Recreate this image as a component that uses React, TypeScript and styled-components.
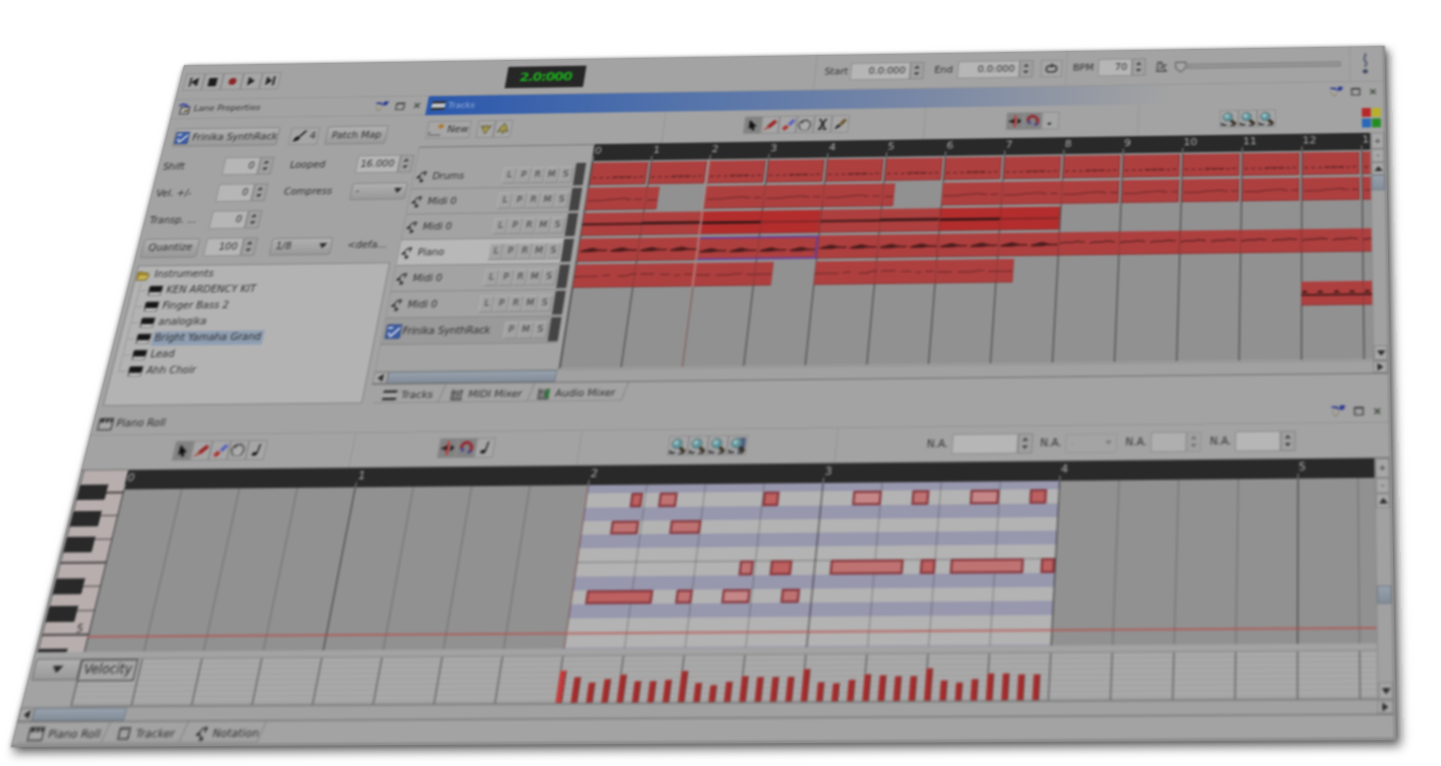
import React from "react";
import styled, { createGlobalStyle, css } from "styled-components";

/* ---------- perspective projection of the window ---------- */

const W = 1254;
const H = 700;
type Pt = [number, number];
const corners: [Pt, Pt, Pt, Pt] = [
  [184, 65.3],
  [1384.5, 46],
  [1396, 740],
  [11, 747],
];

function project([p0, p1, p2, p3]: [Pt, Pt, Pt, Pt]): string {
  const dx1 = p1[0] - p2[0];
  const dx2 = p3[0] - p2[0];
  const sx = p0[0] - p1[0] + p2[0] - p3[0];
  const dy1 = p1[1] - p2[1];
  const dy2 = p3[1] - p2[1];
  const sy = p0[1] - p1[1] + p2[1] - p3[1];
  const det = dx1 * dy2 - dx2 * dy1;
  const g = (sx * dy2 - dx2 * sy) / det;
  const h = (dx1 * sy - sx * dy1) / det;
  const a = p1[0] - p0[0] + g * p1[0];
  const b = p3[0] - p0[0] + h * p3[0];
  const d = p1[1] - p0[1] + g * p1[1];
  const e = p3[1] - p0[1] + h * p3[1];
  const m = [a / W, d / W, 0, g / W, b / H, e / H, 0, h / H, 0, 0, 1, 0, p0[0], p0[1], 0, 1];
  return `matrix3d(${m.map((n) => n.toFixed(9)).join(",")})`;
}

const Global = createGlobalStyle`
  html, body { margin: 0; background: #fff; }
  * { box-sizing: border-box; }
`;

const Stage = styled.div`
  width: 1441px;
  height: 766px;
  overflow: hidden;
  background: #fff;
`;

const Projected = styled.div`
  width: ${W}px;
  height: ${H}px;
  transform-origin: 0 0;
  transform: ${project(corners)};
  background: #949494;
  box-shadow: 4px 5px 9px rgba(0, 0, 0, 0.6), 0 0 5px rgba(0, 0, 0, 0.3);
`;

const Frame = styled.div`
  width: ${W}px;
  height: ${H}px;
  display: flex;
  flex-direction: column;
  overflow: hidden;
  background: #a3a3a3;
  border-right: 2px solid #8a8a8a;
  border-bottom: 2px solid #868686;
  color: #2f2f2f;
  font: 10px/1 "DejaVu Sans", sans-serif;
  white-space: nowrap;
  filter: blur(1.2px);
`;

/* ---------- shared parts ---------- */

const Gap = styled.span<{ $w: number }>`
  flex: 0 0 ${(p) => p.$w}px;
`;

const Label = styled.span<{ $w?: number }>`
  flex: none;
  ${(p) => p.$w && css`width: ${p.$w}px;`}
`;

const raised = css`
  background: linear-gradient(#b0b0b0, #999);
  border: 1px solid #828282;
  border-radius: 2px;
`;

const IconButton = styled.span<{ $w?: number; $on?: boolean }>`
  flex: none;
  width: ${(p) => p.$w ?? 18}px;
  height: 20px;
  display: flex;
  align-items: center;
  justify-content: center;
  gap: 3px;
  border: 1px solid #8a8a8a;
  background: ${(p) => (p.$on ? "#828282" : "#a6a6a6")};
`;

const Button = styled.span<{ $w: number }>`
  flex: none;
  width: ${(p) => p.$w}px;
  height: 21px;
  display: flex;
  align-items: center;
  justify-content: center;
  ${raised}
`;

const Field = styled.span<{ $w: number; $dim?: boolean }>`
  flex: none;
  width: ${(p) => p.$w}px;
  height: 20px;
  display: flex;
  align-items: center;
  justify-content: flex-end;
  padding-right: 4px;
  background: ${(p) => (p.$dim ? "#afafaf" : "#b6b6b6")};
  border: 1px solid #8e8e8e;
`;

const SpinBox = styled.span<{ $dim?: boolean }>`
  flex: none;
  width: 14px;
  height: 20px;
  display: flex;
  flex-direction: column;
  align-items: center;
  justify-content: space-evenly;
  border: 1px solid #858585;
  background: #a0a0a0;
  opacity: ${(p) => (p.$dim ? 0.5 : 1)};
`;

const Select = styled.span<{ $w: number; $dim?: boolean }>`
  flex: none;
  width: ${(p) => p.$w}px;
  height: 19px;
  display: flex;
  align-items: center;
  justify-content: space-between;
  padding: 0 4px;
  ${raised}
  ${(p) => p.$dim && css`background: #a4a4a4; border-color: #959595; color: #8c8c8c;`}
`;

const Tri = ({ d = "down", s = 6, c = "#262626" }: { d?: "up" | "down" | "left" | "right"; s?: number; c?: string }) => {
  const pts = { up: "0,5 3,1 6,5", down: "0,1 6,1 3,5", left: "5,0 1,3 5,6", right: "1,0 5,3 1,6" }[d];
  return (
    <svg width={s} height={s} viewBox="0 0 6 6">
      <polygon points={pts} fill={c} />
    </svg>
  );
};

const Spin = ({ dim }: { dim?: boolean }) => (
  <SpinBox $dim={dim}>
    <Tri d="up" s={5.5} c="#383838" />
    <Tri s={5.5} c="#383838" />
  </SpinBox>
);

/* ---------- icons ---------- */

const Svg = ({ w = 14, h = 14, vb = "0 0 16 16", children }: { w?: number; h?: number; vb?: string; children: React.ReactNode }) => (
  <svg width={w} height={h} viewBox={vb} fill="none">
    {children}
  </svg>
);

const Rewind = () => <Svg><path d="M3 2h2v12H3zM13 2v12L5 8zM13 6v4" fill="#222" /></Svg>;
const Stop = () => <Svg><path d="M3 3h10v11H3z" fill="#1c1c1c" /></Svg>;
const Rec = () => <Svg><circle cx="8" cy="8" r="4.6" fill="#8c2626" /></Svg>;
const Play = () => <Svg><path d="M4 2l8 6-8 6z" fill="#222" /></Svg>;
const Forward = () => <Svg><path d="M3 2l7 6-7 6zM11 2h2.4v12H11z" fill="#222" /></Svg>;

const Cursor = () => <Svg><path d="M4 1l9 9H9l2 4-2.500 1-2-4L4 13z" fill="#0c0c0c" /></Svg>;
const Pencil = () => (
  <Svg w={17} h={16}>
    <path d="M5 9l7-7 3 3-7 7z" fill="#9c2828" />
    <path d="M5 9l3 3-7 2.500z" fill="#a8605a" />
  </Svg>
);
const Eraser = () => (
  <Svg w={17} h={16}>
    <path d="M8 7l5-5.500 2.500 2.500-5 6z" fill="#5a62bc" />
    <path d="M2.500 12l4-4 3 3-4 4z" fill="#ac3232" />
    <path d="M7 8l3 2.500" stroke="#bbb" />
  </Svg>
);
const Hand = () => (
  <Svg w={15} h={15}>
    <path d="M4 14L1.500 8l2-4 2 1.500V2.500L8 3l2-1 1 2 2 0 1.500 4-2 6" fill="#adadad" stroke="#3c3c3c" strokeWidth="1.300" />
    <path d="M4 14.500h8.500" stroke="#666" />
  </Svg>
);
const Cut = () => <Svg><path d="M4 1l5 8 1 5M12 1L7 9l-2 5M3 14.500h4M9 14.500h4" stroke="#161616" strokeWidth="1.900" /></Svg>;
const Brush = () => (
  <Svg>
    <path d="M7 8l5-7 3.500 2.500-6 7z" fill="#6b5426" />
    <path d="M6 8l3 3-3 2-4 2.500 1-3.500z" fill="#2a2a2a" />
  </Svg>
);
const DarkBrush = () => (
  <Svg w={15} h={15}>
    <path d="M7 8l6-7 2 1.500-6 7z" fill="#333" />
    <path d="M6 8l3 3-3 3-5 1 2-5z" fill="#1f1f1f" />
  </Svg>
);
const NoteIcon = () => (
  <Svg>
    <path d="M11 1L9 12" stroke="#222" strokeWidth="1.600" />
    <ellipse cx="6.500" cy="12.500" rx="3" ry="2.200" fill="#1c1c1c" />
  </Svg>
);
const SnapLine = () => (
  <Svg>
    <path d="M1 7h4v-3l4 4-4 4V9H1zM15 8l-4-4v8z" fill="#1c1010" />
    <path d="M8 0v16" stroke="#c83434" strokeWidth="2.200" />
  </Svg>
);
const Magnet = () => (
  <Svg>
    <path d="M3 9C1 3 7 0 11 3c4 3 3 7 1 10" stroke="#942632" strokeWidth="3.400" />
    <path d="M3 8l2 4M13 11l-2 3" stroke="#3b449c" strokeWidth="3" />
  </Svg>
);
const Dot = () => <Svg><circle cx="7" cy="12" r="1.700" fill="#222" /></Svg>;
const Zoom = ({ extra }: { extra?: boolean }) => (
  <Svg w={17} h={18}>
    {extra && <path d="M9 1h6v13H9z" fill="#4a5a7c" />}
    <path d="M1 14.500h5M1.500 12v3M9 15h5" stroke="#2d2d2d" strokeWidth="1.500" />
    <path d="M9 8.500l5.500 5.500" stroke="#33291a" strokeWidth="3" />
    <circle cx="7" cy="6" r="4.500" fill="#5a949c" stroke="#6c7678" strokeWidth="1" />
    <circle cx="6" cy="5" r="2.200" fill="#98c0c2" />
  </Svg>
);
const KeysIcon = () => (
  <Svg w={14} h={11} vb="0 0 14 11">
    <path d="M.5 .5h13v10H.5z" fill="#555" />
    <path d="M.5 .5h13v6H.5z" fill="#151515" />
    <path d="M2 8.500h10.500" stroke="#dcdcdc" strokeWidth="2.400" />
    <path d="M5.500 6v2M9.500 6v2" stroke="#333" strokeWidth="1.200" />
  </Svg>
);
const FolderIcon = () => (
  <Svg w={14} h={12} vb="0 0 14 12">
    <path d="M1 2h4l1 1h5v2h2l-2 6H1z" fill="#a08828" stroke="#75642a" strokeWidth=".8" />
    <path d="M3 6h9l-2 4H2z" fill="#c9b55a" />
  </Svg>
);
const LaneNote = () => (
  <Svg w={12} h={16} vb="0 0 12 16">
    <path d="M5.500 3l4 .5M5.500 3.500L3 8M9.500 4L8.500 7M4 9l3 3.500" stroke="#333" strokeWidth="1.200" />
    <circle cx="8.800" cy="3.300" r="1.500" fill="#303030" />
    <ellipse cx="2.800" cy="8.500" rx="1.900" ry="1.600" fill="#303030" />
    <ellipse cx="6.500" cy="12.700" rx="1.900" ry="1.700" fill="#303030" />
  </Svg>
);
const SynthIcon = () => (
  <Svg w={16} h={16}>
    <path d="M1 1h14v14H1z" fill="#3c5ca4" stroke="#26407a" />
    <path d="M3 9l3 4 8-9M2 4h5" stroke="#c8cfdc" strokeWidth="2" />
  </Svg>
);
const PanelIcon = () => (
  <Svg w={14} h={14}>
    <path d="M4 5h10v9H4z" fill="#b6b6b6" stroke="#333" strokeWidth="1.300" />
    <path d="M1 3c4-3 8-2 11 2" stroke="#303c9c" strokeWidth="2.200" />
    <path d="M8 11l5-2" stroke="#5a4a22" strokeWidth="2" />
  </Svg>
);
const TracksIcon = ({ lit }: { lit?: boolean }) => (
  <Svg w={14} h={12} vb="0 0 14 12">
    <path d="M0 1h14v10H0z" fill={lit ? "#c4c8ce" : "#acacac"} />
    <path d="M0 1h14v2.500H0zM0 8.500h14V11H0z" fill="#2c2c2c" />
  </Svg>
);
const MixerIcon = ({ green }: { green?: boolean }) => (
  <Svg w={13} h={13}>
    <path d="M1 2v13h13M4 3v11M8 3v11M12 2v12M2 6h4M7 9h3M10 5h4" stroke="#3f3f3f" strokeWidth="1.500" />
    {green && <path d="M9.500 3h4v11h-4z" fill="#23752f" />}
  </Svg>
);
const RollIcon = () => (
  <Svg w={15} h={13} vb="0 0 16 14">
    <path d="M1 1h14v12H1z" stroke="#3c3c3c" strokeWidth="1.300" fill="#a9a9a9" />
    <path d="M2 1h4v4H2zM7.500 1h3v4h-3zM12 1h2.500v4H12z" fill="#333" />
  </Svg>
);
const TrackerIcon = () => <Svg w={13} h={13}><path d="M2 2h11v12H2zM5 2v2M9 2v2" stroke="#333" strokeWidth="1.600" /></Svg>;
const PinIcon = () => (
  <Svg w={14} h={12} vb="0 0 14 12">
    <path d="M1 2h5l1 2M9 4l1-3h3l-1 3z" stroke="#2c3a90" strokeWidth="1.700" fill="#2c3a90" />
    <path d="M3 5v4l2 2 2-2V6" stroke="#8b8878" strokeWidth="1.300" fill="#b4b1a6" />
  </Svg>
);
const MaxIcon = () => <Svg w={10} h={10} vb="0 0 10 10"><path d="M1 1.500h8v7.500H1z" stroke="#3a3a3a" strokeWidth="1.200" /><path d="M1 1.800h8" stroke="#3a3a3a" strokeWidth="1.800" /></Svg>;
const CloseIcon = () => <Svg w={9} h={9} vb="0 0 10 10"><path d="M2 2l6 6M8 2L2 8" stroke="#3f4a3f" strokeWidth="1.700" /></Svg>;
const LoopIcon = () => <Svg><path d="M4 4.500h8l2 2.500v3l-2 2.500H4L2 10V7z" stroke="#2e2e2e" strokeWidth="1.800" /><path d="M7 1.500L10 4 7 6.500" stroke="#2e2e2e" strokeWidth="1.400" /></Svg>;
const Metronome = () => <Svg w={14} h={16}><path d="M2 14L3 2h4l5 12zM1 14h13M5 11l8-6M5 5h2" stroke="#484848" strokeWidth="1.500" /></Svg>;
const Exclaim = () => <Svg w={10} h={26} vb="0 0 10 26"><path d="M5 1c2 3-3 6 0 9s0 5 0 7" stroke="#555c6c" strokeWidth="2" /><circle cx="5" cy="22" r="2.500" fill="#3d4660" /></Svg>;
const NewIcon = () => <Svg w={16} h={16}><path d="M1 14h12M1 14V10" stroke="#6d6d6d" strokeWidth="1.500" /><path d="M12 1l.8 2.200L15 4l-2.200.8L12 7l-.8-2.200L9 4l2.200-.8z" fill="#b2701c" stroke="#b2701c" /></Svg>;
const ArrowDn = () => <Svg w={14} h={14}><path d="M2 3l4 3 1-3h2l1 3 4-3-3 6-3 5-3-5z" fill="#a89a48" stroke="#5e5a3a" /></Svg>;
const ArrowUp = () => <Svg w={14} h={14}><path d="M2 12l3-6 4-5 3 5 2 6-4-2-1 4H8l-1-4z" fill="#a89a48" stroke="#5e5a3a" /></Svg>;

/* ---------- transport bar ---------- */

const Transport = styled.div`
  flex: 0 0 41px;
  display: flex;
  align-items: center;
  padding-left: 5px;
  border-bottom: 1px solid #949494;
`;

const Lcd = styled.span`
  flex: none;
  width: 82px;
  height: 25px;
  display: flex;
  align-items: center;
  justify-content: center;
  background: #262626;
  color: #1cac1c;
  font-size: 14.500px;
  font-weight: bold;
  letter-spacing: -1.050px;
`;

const Divider = styled.span`
  flex: none;
  width: 1px;
  height: 100%;
  background: #949494;
`;

const SliderTrack = styled.span`
  flex: none;
  width: 157px;
  height: 6px;
  border: 1px solid #808080;
  background: #949494;
`;

const Knob = () => (
  <Svg w={14} h={15}><path d="M2 2h12v7l-6 6-6-6z" fill="#a8a8a8" stroke="#686868" strokeWidth="1.600" /></Svg>
);

/* ---------- pane chrome ---------- */

const Middle = styled.div`
  flex: 0 0 341px;
  display: flex;
`;

const Pane = styled.section<{ $w?: number }>`
  flex: ${(p) => (p.$w ? `0 0 ${p.$w}px` : "1 1 0")};
  min-width: 0;
  display: flex;
  flex-direction: column;
`;

const TitleBar = styled.header<{ $active?: boolean; $h?: number }>`
  flex: 0 0 ${(p) => p.$h ?? 22}px;
  display: flex;
  align-items: center;
  gap: 3px;
  padding-left: 5px;
  border-bottom: 1px solid #949494;
  ${(p) =>
    p.$active &&
    css`
      color: #9db4da;
      border-bottom: 0;
      background: linear-gradient(90deg, #2a58ae, #5876aa 30%, #7686a6 50%, #a3a3a3 78%);
    `}
`;

const TitleText = styled.span<{ $size?: number }>`
  flex: 1;
  font-size: ${(p) => p.$size ?? 9}px;
`;

const Controls = styled.span`
  display: flex;
  align-items: center;
  gap: 8px;
  padding-right: 6px;
`;

const WindowControls = () => (
  <Controls>
    <PinIcon />
    <MaxIcon />
    <CloseIcon />
  </Controls>
);

const ToolRow = styled.div<{ $h: number }>`
  flex: 0 0 ${(p) => p.$h}px;
  display: flex;
`;

const ToolCell = styled.div<{ $w?: number; $start?: boolean; $pr?: number; $pl?: number; $pb?: number }>`
  flex: ${(p) => (p.$w ? `0 0 ${p.$w}px` : "1")};
  display: flex;
  align-items: center;
  justify-content: ${(p) => (p.$start ? "flex-start" : "center")};
  padding: 0 ${(p) => p.$pr ?? 0}px ${(p) => p.$pb ?? 0}px ${(p) => p.$pl ?? 0}px;
  & + & {
    border-left: 1px solid #949494;
  }
`;

/* ---------- lane properties ---------- */

const FormRow = styled.div<{ $h?: number; $pl?: number; $pt?: number }>`
  flex: 0 0 ${(p) => p.$h ?? 30}px;
  display: flex;
  align-items: center;
  padding: ${(p) => p.$pt ?? 0}px 0 0 ${(p) => p.$pl ?? 5}px;
`;

const TreeBox = styled.div`
  flex: none;
  width: 256px;
  height: 148px;
  margin: 4px 0 0 5px;
  padding: 1px 0 0 0;
  background: #b3b3b3;
  border: 1px solid #828282;
`;

const TreeRow = styled.div<{ $depth?: number }>`
  height: 17px;
  display: flex;
  align-items: center;
  gap: 2px;
  padding-left: ${(p) => (p.$depth ? 6 : 0)}px;
`;

const Branch = styled.span<{ $last?: boolean }>`
  align-self: flex-start;
  width: 8px;
  height: ${(p) => (p.$last ? 9 : 17)}px;
  border-left: 1px dotted #858585;
  background: linear-gradient(#999, #999) 0 8px / 8px 1px no-repeat;
`;

const TreeText = styled.span<{ $sel?: boolean }>`
  padding: 2px 2px 3px 2px;
  font-size: 10px;
  ${(p) => p.$sel && css`background: #8f9fb3;`}
`;

const instruments = ["KEN ARDENCY KIT", "Finger Bass 2", "analogika", "Bright Yamaha Grand", "Lead", "Ahh Choir"];

/* ---------- lanes ---------- */

const LaneArea = styled.div`
  flex: 0 0 243px;
  display: flex;
`;

const LaneList = styled.div`
  flex: 0 0 182px;
  padding: 19px 5px 0 0;
  border-top: 1px solid #6f6f6f;
  border-right: 1px solid #6f6f6f;
  border-left: 1px solid #939393;
`;

const Lane = styled.div<{ $tone?: string }>`
  height: 28px;
  display: flex;
  align-items: center;
  padding-left: 2px;
  border-bottom: 1px solid #868686;
  background: ${(p) => p.$tone ?? "transparent"};
`;

const LaneName = styled.span<{ $pl?: number }>`
  flex: 1;
  padding-left: ${(p) => p.$pl ?? 2}px;
  letter-spacing: -0.1px;
`;

const Toggle = styled.span`
  width: 14.400px;
  height: 18px;
  display: flex;
  align-items: center;
  justify-content: center;
  border: 1px solid #858585;
  border-left-color: #b4b4b4;
  border-top-color: #b4b4b4;
  background: #a3a3a3;
  color: #333;
  font-size: 9px;
`;

const Meter = styled.span`
  width: 10px;
  height: 25px;
  margin-left: 2px;
  background: #444;
`;

const Timeline = styled.div`
  flex: 1;
  min-width: 0;
  display: flex;
  flex-direction: column;
  overflow: hidden;
`;

const Ruler = styled.div<{ $h: number }>`
  flex: 0 0 ${(p) => p.$h}px;
  display: flex;
  background: #292929;
  overflow: hidden;
`;

const RulerCell = styled.span<{ $w: number }>`
  flex: 0 0 ${(p) => p.$w}px;
  padding: 2px 0 0 1px;
  color: #b0b0b0;
  font-size: 11px;
  background: linear-gradient(#888, #888) 0 100% / 1px 5px no-repeat;
`;

const ArrangeCanvas = styled.div`
  position: relative;
  flex: 1;
  background: #919191;
  border-bottom: 1px solid #a5a5a5;
`;

const ArrangeGrid = styled.div`
  position: absolute;
  inset: 0;
  background: repeating-linear-gradient(90deg, rgba(45, 45, 45, 0.75) 0 1.400px, transparent 1.400px 60px);
`;

const GridUnder = styled(ArrangeGrid)``;
const GridOver = styled(ArrangeGrid)`
  opacity: 0.35;
`;

const Clip = styled.div<{ $row: number; $from: number; $to: number; $bright?: boolean; $sel?: boolean; $gap?: boolean }>`
  position: absolute;
  top: ${(p) => p.$row * 28 + 1.800}px;
  left: ${(p) => p.$from * 60}px;
  width: ${(p) => (p.$to - p.$from) * 60}px;
  height: 25px;
  overflow: hidden;
  background: ${(p) => (p.$bright ? "#b32d2d" : "#ae3f3f")};
  border-bottom: 1px solid #8a3030;
  border-right: 1px solid ${(p) => (p.$sel || !p.$gap ? "#a03838" : "#7d2c2c")};
  ${(p) => p.$gap && css`box-shadow: 1.500px 0 0 0.5px #9c9696;`}
  ${(p) => p.$sel && css`border: 2px solid #6a3f98; border-left: 0;`}
`;

const Playhead = styled.div<{ $x: number }>`
  position: absolute;
  top: 0;
  bottom: 0;
  left: ${(p) => p.$x}px;
  width: 1.500px;
  background: rgba(205, 140, 135, 0.3);
`;

const ClipPlayhead = styled(Playhead)`
  bottom: auto;
  height: 140px;
  background: rgba(190, 160, 155, 0.5);
`;

type ClipData = { row: number; from: number; to: number; kind: string; bright?: boolean; sel?: boolean; gap?: boolean };
const clips: ClipData[] = [];
for (let i = 0; i < 14; i++) clips.push({ row: 0, from: i + 0.02, to: i + 0.96, kind: "drum", gap: true });
clips.push({ row: 1, from: 0, to: 1.210, kind: "line" }, { row: 1, from: 2.020, to: 5.200, kind: "line" }, { row: 1, from: 6, to: 8.960, kind: "line", gap: true });
for (let i = 9; i < 14; i++) clips.push({ row: 1, from: i + 0.02, to: i + 0.96, kind: "line", gap: true });
[0, 2, 4, 6].forEach((n) => clips.push({ row: 2, from: n, to: n + 2, kind: n % 4 === 2 ? "padFade" : "pad", bright: n % 4 === 2 }));
[0, 2, 4, 6, 8, 10, 12].forEach((n) => clips.push({ row: 3, from: n, to: n + 2, kind: n > 7 ? "chordLow" : "chord", sel: n === 2 }));
clips.push({ row: 4, from: 0, to: 3.300, kind: "seq" }, { row: 4, from: 4, to: 7.290, kind: "seq" }, { row: 5, from: 12, to: 14, kind: "choir" });

const Pattern = ({ kind }: { kind: string }) => {
  const bars = [0, 1, 2, 3];
  return (
    <svg width="240" height="24" viewBox="0 0 240 24" fill="none" stroke="#4b1c1c">
      {kind === "drum" && <path d="M2 17h46M50 16.500h8" strokeWidth="1.700" strokeDasharray="3.500 3.500" opacity=".7" />}
      {kind === "drum" && <path d="M22 16.500h20" strokeWidth="1.500" opacity=".55" />}
      {kind === "line" && bars.map((b) => <path key={b} d={`M${b * 60 + 2} 14.500h14l6-1 8-.5 5-.5h6v1h5M${b * 60 + 49} 13.500h8`} strokeWidth="1.300" opacity=".5" />)}
      {kind === "pad" && <path d="M0 12.500h60" strokeWidth="2.600" />}
      {kind === "pad" && <path d="M60 12h60" strokeWidth="3.200" stroke="#3a1818" />}
      {kind === "padFade" && <path d="M0 12.500h60" strokeWidth="3" stroke="#3f1616" />}
      {kind === "padFade" && <path d="M60 12.500h60" strokeWidth="1.600" opacity=".6" />}
      {kind === "chord" &&
        [0, 30, 60, 90].map((x) => (
          <path key={x} d={`M${x + 2} 13.500l7-2 5-1.200 5 1.500 4 .7 6 0v1.200h-10l-5 .8H${x + 4}z`} fill="#3d1717" strokeWidth=".5" opacity=".9" />
        ))}
      {kind === "chordLow" &&
        [0, 30, 60, 90].map((x) => <path key={x} d={`M${x + 1} 12l5-1h8l4-1 8 1`} strokeWidth="1.700" opacity=".75" />)}
      {kind === "seq" && <path d="M0 13h24M28 12h8M44 13h8l5-2h5M66 11h14M86 12h10M100 13h6M110 12h8M122 13h14M142 13h14l4-1h8M172 13h30" strokeWidth="1.500" opacity=".5" />}
      {kind === "choir" && <path d="M0 14h80" strokeWidth="1.800" />}
      {kind === "choir" && [1, 16, 32, 47, 62].map((x) => <path key={x} d={`M${x} 11.500l2-2h1l2 2z`} fill="#3d1717" strokeWidth="1" />)}
    </svg>
  );
};

/* ---------- scroll bars ---------- */

const VScroll = styled.div`
  flex: 0 0 14px;
  display: flex;
  flex-direction: column;
  background: #a1a1a1;
  border-left: 1px solid #8a8a8a;
`;

const ScrollButton = styled.span<{ $s?: number }>`
  flex: 0 0 ${(p) => p.$s ?? 14}px;
  display: flex;
  align-items: center;
  justify-content: center;
  background: #a8a8a8;
  border: 1px solid #868686;
  font-size: 9px;
`;

const Thumb = styled.span<{ $s: number }>`
  flex: 0 0 ${(p) => p.$s}px;
  background: linear-gradient(#98a2ae, #838d99);
  border: 1px solid #757e88;
`;

const Fill = styled.span`
  flex: 1;
`;

const HScroll = styled.div`
  flex: 0 0 14px;
  display: flex;
  background: #a1a1a1;
  border-top: 1px solid #8e8e8e;
  border-bottom: 1.500px solid #6c6c6c;
`;

const Tabs = styled.div`
  display: flex;
  align-items: stretch;
  padding-left: 7px;
  height: 19px;
`;

const Tab = styled.span<{ $w: number; $pl?: number }>`
  width: ${(p) => p.$w}px;
  display: flex;
  align-items: center;
  gap: 4px;
  padding: 3px 0 0 ${(p) => p.$pl ?? 5}px;
  border-bottom: 1px solid #8a8a8a;
  border-right: 1px solid #828282;
  transform: skewX(-14deg);
  & > * {
    transform: skewX(14deg);
  }
`;

/* ---------- piano roll ---------- */

const RollPane = styled.section`
  flex: 1;
  display: flex;
  flex-direction: column;
`;

const RollBody = styled.div`
  flex: 0 0 225px;
  display: flex;
  border-top: 1px solid #6f6f6f;
`;

const RollMain = styled.div`
  flex: 1;
  min-width: 0;
  display: flex;
  flex-direction: column;
`;

const RollTop = styled.div`
  flex: 0 0 174px;
  display: flex;
  overflow: hidden;
`;

const Keyboard = styled.div`
  position: relative;
  flex: 0 0 44px;
  margin-left: 2px;
  background: repeating-linear-gradient(#b8aeae 0 21.450px, #4c4848 21.450px 22.650px);
  border-left: 1px solid #555;
`;

const BlackKey = styled.span<{ $y: number }>`
  position: absolute;
  left: 0;
  top: ${(p) => p.$y - 440.500}px;
  width: 27px;
  height: 15px;
  background: #292929;
`;

const OctaveLabel = styled.span`
  position: absolute;
  top: 148px;
  right: 6px;
  font-size: 10px;
`;

const RollCanvas = styled.div`
  position: relative;
  flex: 1;
  background: #919191;
`;

const Selection = styled.div`
  position: absolute;
  top: 0;
  bottom: 0;
  left: 448px;
  width: 449px;
  background: #b3b3b3;
  overflow: hidden;
`;

const Band = styled.span<{ $y: number; $line?: boolean }>`
  position: absolute;
  left: 0;
  right: 0;
  top: ${(p) => p.$y - 459}px;
  height: ${(p) => (p.$line ? 1 : 13.200)}px;
  background: ${(p) => (p.$line ? "#808080" : "#9797ae")};
`;

const RollGrid = styled.div`
  position: absolute;
  inset: 0;
  background:
    repeating-linear-gradient(90deg, rgba(40, 40, 40, 0.75) 0 1.500px, transparent 1.500px 224px),
    repeating-linear-gradient(90deg, rgba(70, 70, 70, 0.45) 0 1px, transparent 1px 56px);
`;

const Note = styled.span<{ $x: number; $end: number; $y: number; $c: string }>`
  position: absolute;
  left: ${(p) => p.$x - 47}px;
  width: ${(p) => p.$end - p.$x}px;
  top: ${(p) => p.$y - 459}px;
  height: 13.500px;
  background: ${(p) => p.$c};
  border: 2px solid #84343a;
`;

const RedLine = styled.div`
  position: absolute;
  left: 0;
  right: 0;
  top: 139.700px;
  height: 2px;
  background: rgba(185, 75, 70, 0.65);
`;

const Lit = "#c48686";
const Mid = "#be7272";
const Deep = "#bc6060";
const notes: [number, number, number, string][] = [
  [537.5, 549, 467.300, Deep], [565.4, 582, 467.300, Mid], [663.6, 679, 467.300, Deep], [748.5, 775.5, 467.300, Lit],
  [804.9, 821, 467.300, Mid], [860, 887, 467.300, Lit], [916, 932, 467.300, Deep],
  [522.9, 549, 493.700, Mid], [579, 607.6, 493.700, Mid],
  [649.4, 662, 533.300, Mid], [677.5, 698, 533.300, Deep], [734.2, 802.5, 533.300, Mid], [818.4, 832, 533.300, Deep],
  [845.5, 914, 533.300, Mid], [929.6, 943, 533.300, Deep],
  [509.2, 571, 559.700, Deep], [593.2, 607.6, 559.700, Mid], [635.6, 662.2, 559.700, Lit], [691.2, 707.8, 559.700, Mid],
];

const Velocity = styled.div`
  flex: 0 0 50px;
  display: flex;
  padding-top: 6px;
`;

const VelocityHead = styled.div`
  flex: 0 0 46px;
  padding-left: 3px;
`;

const VelocityPick = styled.div`
  height: 20px;
  display: flex;
  align-items: center;
  justify-content: center;
  ${raised}
  border-color: #707070;
`;

const VelocityCanvas = styled.div`
  position: relative;
  flex: 1;
  border-top: 1px solid #858585;
  border-bottom: 1px solid #707070;
  background:
    repeating-linear-gradient(90deg, rgba(60, 60, 60, 0.8) 0 1.300px, transparent 1.300px 56px),
    repeating-linear-gradient(#a9a9a9 0 4px, #9e9e9e 4px 5px);
`;

const VelocityTag = styled.span`
  width: 53px;
  height: 20px;
  display: flex;
  align-items: center;
  justify-content: center;
  border: 1px solid #3c3c3c;
  background: #a6a6a6;
  font-size: 11.500px;
`;

const VelBar = styled.span<{ $i: number; $h: number }>`
  position: absolute;
  bottom: 0;
  left: ${(p) => 447.500 + p.$i * 14}px;
  width: 6px;
  height: ${(p) => p.$h * 0.295}px;
  background: ${(p) => (p.$i === 0 ? "#c43a3a" : "#a42c2c")};
  border-right: 1px solid #6e2a2a;
`;

const velocities = [
  100, 78, 62, 72, 84, 66, 63, 67, 95, 57, 52, 61, 78, 76, 73, 73, 97, 58, 54, 64, 80, 78, 75, 76, 98, 61, 55, 66, 82, 80, 78, 78,
];

/* ---------- application ---------- */

const laneRows: { name: string; tone?: string; synth?: boolean }[] = [
  { name: "Drums" },
  { name: "Midi 0" },
  { name: "Midi 0" },
  { name: "Piano", tone: "#b8b8b8" },
  { name: "Midi 0" },
  { name: "Midi 0" },
  { name: "Frinika SynthRack", tone: "#9a9a9a", synth: true },
];

const Scroller = ({ plus, thumbGap, thumb }: { plus: number; thumbGap: number; thumb: number }) => (
  <VScroll>
    <ScrollButton $s={plus}>+</ScrollButton>
    <ScrollButton $s={15}>-</ScrollButton>
    <ScrollButton $s={14}><Tri d="up" s={8} /></ScrollButton>
    <Gap $w={thumbGap} />
    <Thumb $s={thumb} />
    <Fill />
    <ScrollButton $s={15}><Tri s={8} /></ScrollButton>
  </VScroll>
);

export default function App() {
  return (
    <Stage>
      <Global />
      <Projected>
        <Frame>
          <Transport>
            <IconButton $w={20}><Rewind /></IconButton>
            <IconButton $w={20}><Stop /></IconButton>
            <IconButton $w={21}><Rec /></IconButton>
            <IconButton $w={20}><Play /></IconButton>
            <IconButton $w={20}><Forward /></IconButton>
            <Gap $w={239} />
            <Lcd>2.0:000</Lcd>
            <Gap $w={240} />
            <Divider />
            <Gap $w={9} />
            <Label $w={27}>Start</Label>
            <Field $w={62}>0.0:000</Field>
            <Spin />
            <Gap $w={11} />
            <Label $w={24}>End</Label>
            <Field $w={64}>0.0:000</Field>
            <Spin />
            <Gap $w={8} />
            <IconButton $w={22}><LoopIcon /></IconButton>
            <Gap $w={4} />
            <Divider />
            <Gap $w={6} />
            <Label $w={26}>BPM</Label>
            <Field $w={35}>70</Field>
            <Spin />
            <Gap $w={10} />
            <Metronome />
            <Gap $w={5} />
            <Knob />
            <SliderTrack />
            <Gap $w={9} />
            <Divider />
            <Gap $w={10} />
            <Exclaim />
          </Transport>

          <Middle>
            <Pane $w={267}>
              <TitleBar>
                <PanelIcon />
                <TitleText>Lane Properties</TitleText>
                <WindowControls />
              </TitleBar>
              <FormRow $h={40} $pl={9} $pt={3}>
                <Button $w={109}><SynthIcon />&nbsp;Frinika SynthRack</Button>
                <Gap $w={12} />
                <IconButton $w={30}><DarkBrush />4</IconButton>
                <Gap $w={8} />
                <Button $w={63}>Patch Map</Button>
              </FormRow>
              <FormRow>
                <Label $w={63}>Shift</Label>
                <Field $w={37}>0</Field>
                <Spin />
                <Gap $w={18} />
                <Label $w={69}>Looped</Label>
                <Field $w={44}>16.000</Field>
                <Spin />
              </FormRow>
              <FormRow>
                <Label $w={63}>Vel. +/-</Label>
                <Field $w={37}>0</Field>
                <Spin />
                <Gap $w={18} />
                <Label $w={69}>Compress</Label>
                <Select $w={57}>-<Tri s={8} /></Select>
              </FormRow>
              <FormRow>
                <Label $w={63}>Transp. ...</Label>
                <Field $w={37}>0</Field>
                <Spin />
              </FormRow>
              <FormRow>
                <Button $w={57}>Quantize</Button>
                <Gap $w={7} />
                <Field $w={38}>100</Field>
                <Spin />
                <Gap $w={15} />
                <Select $w={62}>1/8<Tri s={8} /></Select>
                <Gap $w={16} />
                <Label>&lt;defa...</Label>
              </FormRow>
              <TreeBox>
                <TreeRow><FolderIcon /><TreeText>Instruments</TreeText></TreeRow>
                {instruments.map((n, i) => (
                  <TreeRow key={n} $depth={1}>
                    <Branch $last={i === instruments.length - 1} />
                    <KeysIcon />
                    <TreeText $sel={i === 3}>{n}</TreeText>
                  </TreeRow>
                ))}
              </TreeBox>
            </Pane>

            <Pane>
              <TitleBar $active>
                <TracksIcon lit />
                <TitleText>Tracks</TitleText>
                <WindowControls />
              </TitleBar>
              <ToolRow $h={36}>
                <ToolCell $w={250} $start $pb={2}>
                  <Gap $w={5} />
                  <IconButton $w={45}><NewIcon />New</IconButton>
                  <Gap $w={7} />
                  <IconButton><ArrowDn /></IconButton>
                  <IconButton><ArrowUp /></IconButton>
                </ToolCell>
                <ToolCell $w={268} $pb={2} $pl={4}>
                  <IconButton $on><Cursor /></IconButton>
                  <IconButton><Pencil /></IconButton>
                  <IconButton><Eraser /></IconButton>
                  <IconButton><Hand /></IconButton>
                  <IconButton><Cut /></IconButton>
                  <IconButton><Brush /></IconButton>
                </ToolCell>
                <ToolCell $w={218} $pb={3} $pl={2}>
                  <IconButton $on><SnapLine /></IconButton>
                  <IconButton $on><Magnet /></IconButton>
                  <IconButton><Dot /></IconButton>
                </ToolCell>
                <ToolCell $pr={5}>
                  <IconButton $w={19}><Zoom /></IconButton>
                  <IconButton $w={19}><Zoom /></IconButton>
                  <IconButton $w={19}><Zoom /></IconButton>
                </ToolCell>
                <Svg w={23} h={36} vb="0 0 23 36">
                  <path d="M1 8h9v10H1z" fill="#b82828" />
                  <path d="M11 8h9v10h-9z" fill="#b8b02a" />
                  <path d="M1 20h9v10H1z" fill="#2868b8" />
                  <path d="M11 20h9v10h-9z" fill="#248c24" />
                </Svg>
              </ToolRow>
              <LaneArea>
                <LaneList>
                  {laneRows.map((l, i) => (
                    <Lane key={i} $tone={l.tone}>
                      {l.synth ? <SynthIcon /> : <LaneNote />}
                      {!l.synth && <Gap $w={4} />}
                      <LaneName $pl={1}>{l.name}</LaneName>
                      {(l.synth ? "PMS" : "LPRMS").split("").map((c) => <Toggle key={c}>{c}</Toggle>)}
                      <Meter />
                    </Lane>
                  ))}
                </LaneList>
                <Timeline>
                  <Ruler $h={19}>
                    {Array.from({ length: 14 }, (_, i) => <RulerCell key={i} $w={60}>{i}</RulerCell>)}
                  </Ruler>
                  <ArrangeCanvas>
                    <GridUnder />
                    {clips.map((c, i) => (
                      <Clip key={i} $row={c.row} $from={c.from} $to={c.to} $bright={c.bright} $sel={c.sel} $gap={c.gap}>
                        <Pattern kind={c.kind} />
                      </Clip>
                    ))}
                    <GridOver />
                    <Playhead $x={119} />
                    <ClipPlayhead $x={119} />
                  </ArrangeCanvas>
                </Timeline>
                <Scroller plus={18} thumbGap={0} thumb={17} />
              </LaneArea>
              <HScroll>
                <ScrollButton><Tri d="left" s={8} /></ScrollButton>
                <Thumb $s={166} />
                <Fill />
                <ScrollButton><Tri d="right" s={8} /></ScrollButton>
              </HScroll>
              <Tabs>
                <Tab $w={64} $pl={6}><TracksIcon /><span>Tracks</span></Tab>
                <Tab $w={87} $pl={9}><MixerIcon /><span>MIDI Mixer</span></Tab>
                <Tab $w={92} $pl={7}><MixerIcon green /><span>Audio Mixer</span></Tab>
              </Tabs>
            </Pane>
          </Middle>

          <RollPane>
            <TitleBar $h={23}>
              <RollIcon />
              <TitleText $size={10}>Piano Roll</TitleText>
              <WindowControls />
            </TitleBar>
            <ToolRow $h={34}>
              <ToolCell $w={260} $pb={3} $pl={1}>
                <IconButton $on><Cursor /></IconButton>
                <IconButton><Pencil /></IconButton>
                <IconButton><Eraser /></IconButton>
                <IconButton><Hand /></IconButton>
                <IconButton><NoteIcon /></IconButton>
              </ToolCell>
              <ToolCell $w={220} $pb={3}>
                <IconButton $on><SnapLine /></IconButton>
                <IconButton $on><Magnet /></IconButton>
                <IconButton><NoteIcon /></IconButton>
              </ToolCell>
              <ToolCell $w={247} $pb={2}>
                <IconButton $w={19}><Zoom /></IconButton>
                <IconButton $w={19}><Zoom /></IconButton>
                <IconButton $w={19}><Zoom /></IconButton>
                <IconButton $w={19}><Zoom extra /></IconButton>
              </ToolCell>
              <ToolCell $start>
                <Gap $w={86} />
                <Label $w={24}>N.A.</Label>
                <Field $w={63} />
                <Spin />
                <Gap $w={7} />
                <Label $w={24}>N.A.</Label>
                <Select $w={49} $dim>-<Tri s={6} c="#777" /></Select>
                <Gap $w={8} />
                <Label $w={24}>N.A.</Label>
                <Field $w={34} $dim />
                <Spin dim />
                <Gap $w={8} />
                <Label $w={24}>N.A.</Label>
                <Field $w={43} />
                <Spin />
              </ToolCell>
            </ToolRow>
            <RollBody>
              <RollMain>
                <RollTop>
                  <Keyboard>
                    {[454.5, 480, 505, 545.5, 571.5, 611.5].map((y) => <BlackKey key={y} $y={y} />)}
                    <OctaveLabel>5</OctaveLabel>
                  </Keyboard>
                  <Timeline>
                    <Ruler $h={19}>
                      {Array.from({ length: 6 }, (_, i) => <RulerCell key={i} $w={224}>{i}</RulerCell>)}
                    </Ruler>
                    <RollCanvas>
                      <Selection>
                        {[454.1, 480.5, 506.9, 546.5, 572.9, 612.5].map((y) => <Band key={y} $y={y} />)}
                        <Band $y={533} $line />
                      </Selection>
                      <RollGrid />
                      {notes.map(([x, e, y, c], i) => <Note key={i} $x={x} $end={e} $y={y} $c={c} />)}
                      <RedLine />
                      <Playhead $x={447} />
                    </RollCanvas>
                  </Timeline>
                </RollTop>
                <Velocity>
                  <VelocityHead>
                    <VelocityPick><Tri s={10} /></VelocityPick>
                  </VelocityHead>
                  <VelocityCanvas>
                    <VelocityTag>Velocity</VelocityTag>
                    {velocities.map((h, i) => <VelBar key={i} $i={i} $h={h} />)}
                  </VelocityCanvas>
                </Velocity>
              </RollMain>
              <Scroller plus={19} thumbGap={73} thumb={17} />
            </RollBody>
            <HScroll>
              <ScrollButton $s={13}><Tri d="left" s={8} /></ScrollButton>
              <Thumb $s={86} />
              <Fill />
              <ScrollButton><Tri d="right" s={8} /></ScrollButton>
            </HScroll>
            <Tabs>
              <Tab $w={78} $pl={6}><RollIcon /><span>Piano Roll</span></Tab>
              <Tab $w={72} $pl={7}><Gap $w={0} /><TrackerIcon /><span>Tracker</span></Tab>
              <Tab $w={72} $pl={7}><Gap $w={0} /><LaneNote /><span>Notation</span></Tab>
            </Tabs>
          </RollPane>
        </Frame>
      </Projected>
    </Stage>
  );
}
